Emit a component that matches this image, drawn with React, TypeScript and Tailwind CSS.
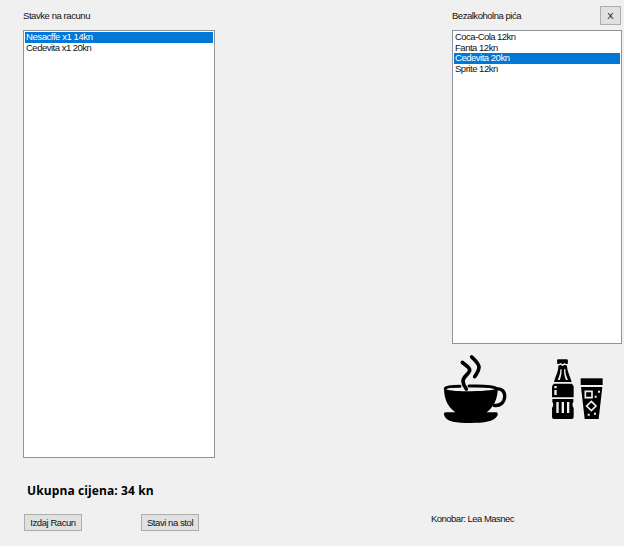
import React from "react";

type Item = { text: string; spacing: string };
type ListBoxProps = { items: Item[]; selected: number; className: string };

function ListBox({ items, selected, className }: ListBoxProps) {
  return (
    <ul className={`border border-[#8f949c] bg-white p-px ${className}`}>
      {items.map((item, i) => (
        <li
          key={item.text}
          className={`flex h-[10.5px] items-center whitespace-nowrap pl-px leading-[10px] ${
            i === selected ? "bg-[#0078d7] text-white" : ""
          }`}
        >
          <span className={item.spacing}>{item.text}</span>
        </li>
      ))}
    </ul>
  );
}

function Button({ label, className }: { label: string; className: string }) {
  return (
    <button
      className={`flex items-center justify-center whitespace-nowrap border border-[#adadad] bg-[#e1e1e1] leading-none ${className}`}
    >
      {label}
    </button>
  );
}

function CoffeeIcon() {
  return (
    <svg width="64" height="70" viewBox="39 57 192 210" fill="none" stroke="#000" strokeLinecap="round">
      <path d="M97 82C106 91 119 96 119 105C119 117 99 123 99 138C99 149 104 155 109 162" strokeWidth="11" />
      <path d="M125 66C137 77 147 86 147 97C147 109 140 115 134 125" strokeWidth="11" />
      <path d="M90 154C68 154 49 156 46 160M117 153C153 152 191 154 199 160" strokeWidth="9" />
      <path d="M42 160C51 167 78 169 109 169C153 169 191 167 203 160C204 190 191 217 170 232H198C204 232 205 240 201 244C191 260 163 264 122 264C78 264 50 260 43 242C40 236 42 232 48 232H76C53 216 42 191 42 160Z" fill="#000" stroke="none" />
      <path d="M199 162C214 159 225 169 224 186C223 203 210 214 192 211" strokeWidth="10" />
    </svg>
  );
}

function DrinksIcon() {
  return (
    <svg width="53" height="62" viewBox="63 69 159 186" fill="#000">
      <path d="M83 73H112Q116 78 113 87H108L104 84L98 88L91 84L87 87H82Q79 78 83 73Z" />
      <path d="M85 92L91 89L98 93L105 89L111 92C112 112 121 124 125 141H72C76 124 85 111 85 92Z" />
      <path d="M72 146H125Q131 149 131 157V187H66V157Q66 149 72 146Z" />
      <path d="M67 192H130V201Q124 208 131 219V246Q131 252 125 252H72Q66 252 66 246V219Q73 208 67 201Z" />
      <g fill="#f0f0f0">
        <path d="M91 103H95C95 117 93 127 89 135H83C88 124 91 116 91 103ZM102 103H106C106 116 109 124 114 135H108C104 127 102 117 102 103Z" />
        <path d="M73 153H80V160H73ZM73 165H80V180H73ZM79 201H86V234H79ZM95 201H102V234H95ZM111 201H118V234H111Z" />
      </g>
      <path d="M152 130H218V150H152Z" />
      <path d="M153 156H217L206 252H164Z" />
      <g fill="none" stroke="#f0f0f0" strokeWidth="5">
        <path d="M166 169H186V188H166Z" />
        <path d="M184 199L198 213L184 227L170 213Z" />
      </g>
      <path d="M204 167H210V173H204ZM194 182H200V188H194ZM173 236H179V242H173ZM192 233H198V239H192Z" fill="#f0f0f0" />
    </svg>
  );
}

export default function App() {
  return (
    <main className="flex h-[546px] w-[624px] justify-between overflow-hidden bg-[#f0f0f0] pl-[23px] font-['Liberation_Sans',Arial,sans-serif] text-[9.5px] text-[#111]">
      <section className="flex w-[192px] flex-col">
        <div className="h-[30px] whitespace-nowrap pt-[10px] leading-[11px] tracking-[-0.43px]">Stavke na racunu</div>
        <ListBox
          className="h-[428px]"
          items={[
            { text: "Nesacffe x1 14kn", spacing: "tracking-[-0.42px]" },
            { text: "Cedevita x1 20kn", spacing: "tracking-[-0.5px]" },
          ]}
          selected={0}
        />
        <div className="mt-[23px] whitespace-nowrap pl-[4px] font-['Open_Sans','Noto_Sans',sans-serif] text-[12px] font-bold leading-[20px] tracking-[0.1px] text-black">
          Ukupna cijena: 34 kn
        </div>
        <div className="mt-[13px] flex justify-between pl-px pr-[16px]">
          <Button label="Izdaj Racun" className="h-[17px] w-[58px] tracking-[-0.43px]" />
          <Button label="Stavi na stol" className="h-[17px] w-[58px] tracking-[-0.43px]" />
        </div>
      </section>
      <section className="flex w-[193px] flex-col">
        <div className="flex h-[30px] justify-between pl-[21px] pr-[3px]">
          <span className="whitespace-nowrap pt-[10px] leading-[11px] tracking-[-0.48px]">Bezalkoholna pića</span>
          <Button label="X" className="mt-[6px] h-[19px] w-[21px]" />
        </div>
        <ListBox
          className="ml-[21px] h-[314px] w-[170px]"
          items={[
            { text: "Coca-Cola 12kn", spacing: "tracking-[-0.54px]" },
            { text: "Fanta 12kn", spacing: "tracking-[-0.48px]" },
            { text: "Cedevita 20kn", spacing: "tracking-[-0.48px]" },
            { text: "Sprite 12kn", spacing: "tracking-[-0.48px]" },
          ]}
          selected={2}
        />
        <div className="mt-[10px] flex h-[70px] items-start justify-between pl-[12px] pr-[20px]">
          <CoffeeIcon />
          <div className="pt-[4px]">
            <DrinksIcon />
          </div>
        </div>
        <div className="mt-[89px] whitespace-nowrap leading-[11px] tracking-[-0.52px]">Konobar: Lea Masnec</div>
      </section>
    </main>
  );
}
